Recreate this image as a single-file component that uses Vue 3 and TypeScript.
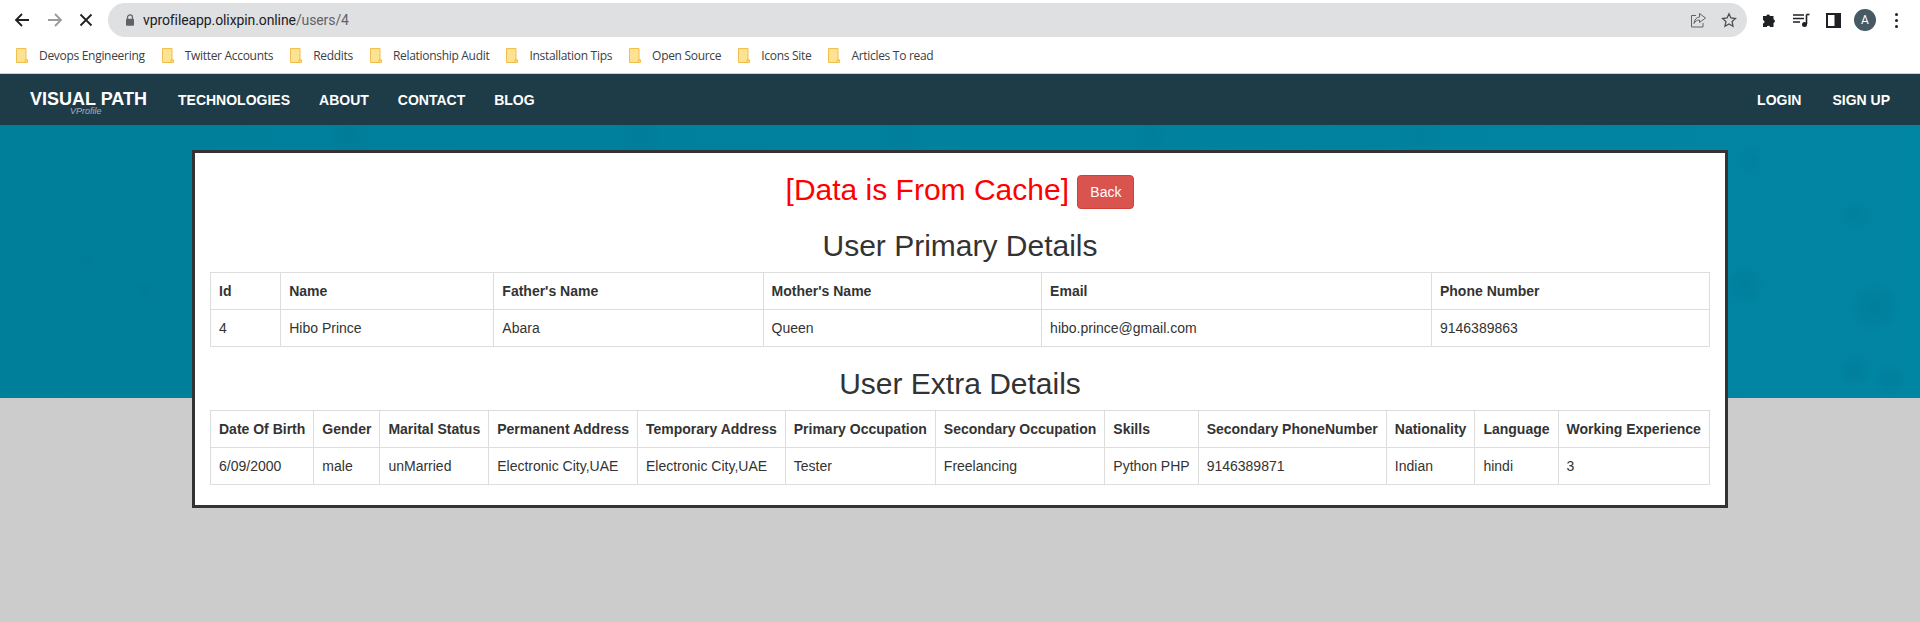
<script setup lang="ts">
const bookmarks: string[] = [
  'Devops Engineering',
  'Twitter Accounts',
  'Reddits',
  'Relationship Audit',
  'Installation Tips',
  'Open Source',
  'Icons Site',
  'Articles To read',
]
const primaryHead: string[] = ['Id', 'Name', "Father's Name", "Mother's Name", 'Email', 'Phone Number']
const primaryRow: string[] = ['4', 'Hibo Prince', 'Abara', 'Queen', 'hibo.prince@gmail.com', '9146389863']
const extraHead: string[] = [
  'Date Of Birth', 'Gender', 'Marital Status', 'Permanent Address', 'Temporary Address',
  'Primary Occupation', 'Secondary Occupation', 'Skills', 'Secondary PhoneNumber',
  'Nationality', 'Language', 'Working Experience',
]
const extraRow: string[] = [
  '6/09/2000', 'male', 'unMarried', 'Electronic City,UAE', 'Electronic City,UAE',
  'Tester', 'Freelancing', 'Python PHP', '9146389871', 'Indian', 'hindi', '3',
]
const navLeft: string[] = ['TECHNOLOGIES', 'ABOUT', 'CONTACT', 'BLOG']
</script>

<template>
  <div class="page">
    <header class="toolbar">
      <div class="nav-icons">
        <svg width="16" height="16" viewBox="0 0 16 16" class="ic"><path d="M15 8H2M8 2L2 8l6 6" fill="none" stroke="#202124" stroke-width="1.8"/></svg>
        <svg width="16" height="16" viewBox="0 0 16 16" class="ic"><path d="M1 8h13M8 2l6 6-6 6" fill="none" stroke="#9a9b9e" stroke-width="1.8"/></svg>
        <svg width="16" height="16" viewBox="0 0 16 16" class="ic ic-stop"><path d="M2.500 2.500l11 11M13.500 2.500l-11 11" fill="none" stroke="#202124" stroke-width="1.800"/></svg>
      </div>
      <div class="omnibox">
        <svg width="10" height="12" viewBox="0 0 10 12" class="lock"><path d="M2.500 5V3.400a2.500 2.500 0 0 1 5 0V5" fill="none" stroke="#5f6368" stroke-width="1.200"/><rect x="1" y="4.800" width="8" height="7" rx="1" fill="#5f6368"/></svg>
        <span class="url"><span class="host">vprofileapp.olixpin.online</span><span class="path">/users/4</span></span>
        <svg width="16" height="16" viewBox="0 0 16 16" class="share"><path d="M6 3.500H1.500V15h11.500v-4" fill="none" stroke="#5f6368" stroke-width="1"/><path d="M9.500 1.500L15.500 6l-6 4.500V8C7 8 5.200 9 4 11.500c.4-4 2.500-6.200 5.500-6.500z" fill="none" stroke="#5f6368" stroke-width="1"/></svg>
        <svg width="16" height="16" viewBox="0 0 16 16" class="star"><path d="M8 1.800l1.900 4.200 4.600.5-3.400 3.100.9 4.600L8 11.900 4 14.200l.9-4.600L1.500 6.500 6.100 6z" fill="none" stroke="#4d5053" stroke-width="1.300"/></svg>
      </div>
      <div class="tool-icons">
        <svg width="16" height="16" viewBox="0 0 16 16" class="t-puzzle"><path d="M1 4h3.300a1.900 1.900 0 0 1 3.700 0H11.500v3.200a1.900 1.900 0 0 1 0 3.700V15H8.200a1.900 1.900 0 0 0-3.500 0H1v-3.400a1.900 1.900 0 0 0 0-3.700z" fill="#202124"/></svg>
        <svg width="17" height="16" viewBox="0 0 17 16" class="t-queue"><path d="M0 3h11M0 6.500h11M0 10h7" stroke="#202124" stroke-width="1.400" fill="none"/><path d="M13.500 2.500V12" stroke="#202124" stroke-width="1.600"/><path d="M13.500 2.500H16.500" stroke="#202124" stroke-width="1.600"/><circle cx="11.500" cy="12.500" r="2.500" fill="#202124"/></svg>
        <svg width="15" height="15" viewBox="0 0 15 15" class="t-panel"><rect x="1" y="1" width="13" height="13" fill="#fff" stroke="#202124" stroke-width="2"/><rect x="8.500" y="1" width="5.500" height="13" fill="#202124"/></svg>
        <span class="avatar">A</span>
        <span class="kebab"><i></i><i></i><i></i></span>
      </div>
    </header>

    <div class="bookmarks">
      <span v-for="b in bookmarks" :key="b" class="bookmark">
        <svg width="12" height="15" viewBox="0 0 12 15"><path d="M.5.500h9.500v11.500h1.500v2.500H.5z" fill="#fde293" stroke="#f0c04a"/><path d="M9 14.500v-2.500h2.500" fill="none" stroke="#f0c04a"/></svg>
        <span>{{ b }}</span>
      </span>
    </div>

    <nav class="navbar">
      <div class="brand">
        <span class="brand-name">VISUAL PATH</span>
        <span class="brand-sub">VProfile</span>
      </div>
      <ul class="menu">
        <li v-for="n in navLeft" :key="n">{{ n }}</li>
      </ul>
      <ul class="menu menu-right">
        <li>LOGIN</li>
        <li>SIGN UP</li>
      </ul>
    </nav>

    <main class="stage">
      <section class="card">
        <h2 class="cache"><span class="cache-text">[Data is From Cache]</span> <button class="back" type="button">Back</button></h2>
        <h2 class="title">User Primary Details</h2>
        <table class="data">
          <thead><tr><th v-for="h in primaryHead" :key="h">{{ h }}</th></tr></thead>
          <tbody><tr><td v-for="c in primaryRow" :key="c">{{ c }}</td></tr></tbody>
        </table>
        <h2 class="title">User Extra Details</h2>
        <table class="data">
          <thead><tr><th v-for="h in extraHead" :key="h">{{ h }}</th></tr></thead>
          <tbody><tr><td v-for="(c, i) in extraRow" :key="i">{{ c }}</td></tr></tbody>
        </table>
      </section>
    </main>
  </div>
</template>

<style>
html, body { margin: 0; background: #cccccc; }
</style>

<style scoped>
.page {
  width: 1920px;
  height: 622px;
  overflow: hidden;
  font-family: "Liberation Sans", Arial, sans-serif;
  font-size: 14px;
  color: #333;
  display: flex;
  flex-direction: column;
}
.toolbar {
  height: 40px;
  background: #fff;
  display: flex;
  align-items: center;
  flex: none;
}
.nav-icons {
  display: flex;
  align-items: center;
  gap: 17px;
  padding-left: 14px;
  width: 94px;
}
.ic { display: block; }
.ic-stop { margin-left: -2px; }
.omnibox {
  width: 1639px;
  height: 34px;
  border-radius: 17px;
  background: #dfe0e2;
  display: flex;
  align-items: center;
  box-sizing: border-box;
  padding-left: 17px;
  padding-right: 9px;
}
.lock { flex: none; }
.url {
  margin-left: 8px;
  font-family: Roboto, "Liberation Sans", sans-serif;
  font-size: 14px;
  letter-spacing: -0.1px;
  flex: 1;
}
.host { color: #202124; }
.path { color: #5f6368; }
.share { margin-right: 15px; }
.star { margin-right: 1px; }
.tool-icons {
  display: flex;
  align-items: center;
  margin-left: 15px;
}
.t-queue { margin-left: 15px; }
.t-panel { margin-left: 16px; }
.avatar {
  width: 22px;
  height: 22px;
  margin-left: 13px;
  border-radius: 50%;
  background: #455a64;
  color: #fff;
  font-size: 12px;
  font-family: Roboto, sans-serif;
  display: flex;
  align-items: center;
  justify-content: center;
}
.kebab {
  display: flex;
  flex-direction: column;
  gap: 3px;
  margin-left: 19px;
}
.kebab i {
  display: block;
  width: 3px;
  height: 3px;
  border-radius: 50%;
  background: #202124;
}
.bookmarks {
  height: 31px;
  background: #fff;
  border-bottom: 1px solid #d0d1d2;
  display: flex;
  align-items: center;
  gap: 17px;
  padding-left: 16px;
  padding-bottom: 2px;
  flex: none;
  font-family: "Open Sans", sans-serif;
  font-size: 12px;
  letter-spacing: -0.3px;
  color: #3c4043;
}
.bookmark {
  display: flex;
  align-items: center;
  gap: 11px;
}
.navbar {
  height: 51px;
  flex: none;
  background: #1e3c48;
  display: flex;
  align-items: center;
  color: #fff;
  font-weight: 700;
  padding: 0 30px;
}
.brand {
  display: flex;
  flex-direction: column;
  width: 148px;
  padding-top: 6px;
  line-height: 1;
}
.brand-name { font-size: 18px; color: #fff; }
.brand-sub {
  font-size: 9px;
  font-weight: 400;
  font-style: italic;
  color: #a9b2b6;
  margin-left: 40px;
  margin-top: -1px;
}
.menu {
  list-style: none;
  display: flex;
  gap: 29px;
  margin: 0;
  padding: 0;
  font-size: 14px;
}
.menu-right { margin-left: auto; gap: 31px; }
.stage {
  flex: 1;
  background:
    linear-gradient(to bottom, transparent 0, transparent 273px, #cccccc 273px, #cccccc 100%),
    radial-gradient(circle 26px at 1875px 182px, rgba(0, 70, 95, 0.1), transparent),
    radial-gradient(circle 20px at 1745px 160px, rgba(0, 70, 95, 0.08), transparent),
    radial-gradient(circle 18px at 1855px 245px, rgba(0, 70, 95, 0.09), transparent),
    radial-gradient(circle 18px at 1890px 255px, rgba(0, 70, 95, 0.08), transparent),
    radial-gradient(circle 18px at 1855px 90px, rgba(0, 70, 95, 0.06), transparent),
    radial-gradient(circle 14px at 1750px 35px, rgba(0, 70, 95, 0.05), transparent),
    radial-gradient(circle 14px at 145px 165px, rgba(0, 70, 95, 0.06), transparent),
    radial-gradient(circle 14px at 88px 135px, rgba(0, 70, 95, 0.04), transparent),
    radial-gradient(circle 22px at 350px 10px, rgba(0, 70, 95, 0.07), transparent),
    radial-gradient(circle 24px at 640px 12px, rgba(0, 70, 95, 0.06), transparent),
    radial-gradient(circle 24px at 900px 8px, rgba(0, 70, 95, 0.06), transparent),
    radial-gradient(circle 22px at 1150px 10px, rgba(0, 70, 95, 0.07), transparent),
    radial-gradient(circle 24px at 1420px 12px, rgba(0, 70, 95, 0.06), transparent),
    linear-gradient(to right, #007f9b 0, #00819e 50%, #0085a2 100%);
  display: flex;
  justify-content: center;
  align-items: flex-start;
  padding-top: 25px;
}
.card {
  width: 1536px;
  box-sizing: border-box;
  border: 3px solid #333;
  background: #fff;
  padding: 0 15px;
  text-align: center;
}
h2 {
  font-weight: 500;
  font-size: 30px;
  line-height: 1.1;
  margin: 20px 0 10px;
  color: #333;
}
.cache { color: #ff0000; }
.cache-text { color: #ff0000; }
.back {
  background: #d9534f;
  border: 1px solid #d43f3a;
  color: #fff;
  border-radius: 4px;
  padding: 6px 12px;
  font: 14px/20px "Liberation Sans", Arial, sans-serif;
  vertical-align: middle;
}
.data {
  width: 100%;
  border-collapse: collapse;
  border-spacing: 0;
  margin-bottom: 20px;
  border: 1px solid #ddd;
  text-align: left;
  line-height: 20px;
}
.data th, .data td {
  border: 1px solid #ddd;
  padding: 8px;
  vertical-align: top;
}
.data th { font-weight: 700; }
</style>
